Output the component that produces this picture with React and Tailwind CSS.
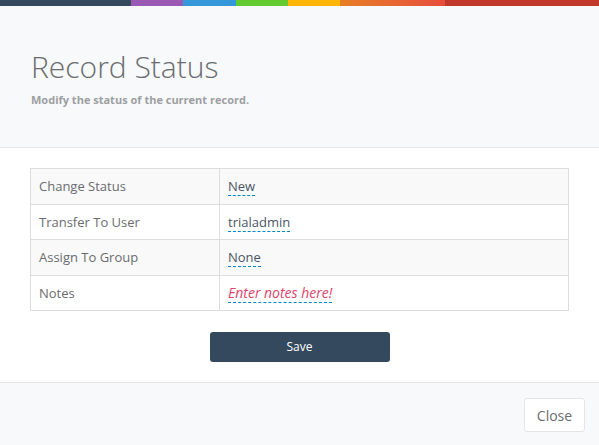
import React from "react";

const rows = [
  { label: "Change Status", value: "New" },
  { label: "Transfer To User", value: "trialadmin" },
  { label: "Assign To Group", value: "None" },
  { label: "Notes", value: "Enter notes here!", empty: true },
];

const ColorBar = () => (
  <div className="flex h-[6px]">
    <div className="w-[131px] bg-[#34495e]" />
    <div className="w-[52px] bg-[#9b59b6]" />
    <div className="w-[53px] bg-[#3498db]" />
    <div className="w-[52px] bg-[#62cb31]" />
    <div className="w-[52px] bg-[#ffb606]" />
    <div className="w-[105px] bg-gradient-to-r from-[#e67e22] to-[#e74c3c]" />
    <div className="flex-1 bg-[#c0392b]" />
  </div>
);

const App = () => {
  return (
    <div className="w-[599px] h-[445px] overflow-hidden bg-white font-['Open_Sans',sans-serif]">
      <ColorBar />

      <div className="bg-[#f7f9fa] border-b border-[#e4e5e7] px-[31px] pt-[44px] pb-[40px]">
        <h4 className="text-[30px] leading-[33px] font-light text-[#6a6c6f]">Record Status</h4>
        <small className="block mt-[9px] text-[11px] leading-[15px] font-bold text-[#9d9fa2]">
          Modify the status of the current record.
        </small>
      </div>

      <div className="px-[30px] pt-[20px] pb-[20px]">
        <table className="w-full border-collapse text-[13px] leading-[18.6px]">
          <tbody>
            {rows.map((row, i) => (
              <tr key={row.label} className={i % 2 === 0 ? "bg-[#f9f9f9]" : "bg-white"}>
                <td className="w-[189px] border border-[#dddddd] px-[8px] py-[8px] text-[#6a6c6f]">
                  {row.label}
                </td>
                <td className="border border-[#dddddd] px-[8px] py-[8px]">
                  <a
                    className={`border-b border-dashed border-[#0088cc] ${
                      row.empty ? "italic text-[14px] text-[#e0446c]" : "text-[#4a5666]"
                    }`}
                  >
                    {row.value}
                  </a>
                </td>
              </tr>
            ))}
          </tbody>
        </table>

        <div className="flex justify-center mt-[21px]">
          <button className="w-[180px] h-[30px] rounded-[3px] bg-[#34495e] text-white text-[12px] leading-[30px]">
            Save
          </button>
        </div>
      </div>

      <div className="bg-[#f7f9fa] border-t border-[#e4e5e7] flex justify-end px-[14px] pt-[15px] pb-[15px]">
        <button className="w-[61px] h-[34px] rounded-[3px] border border-[#e4e5e7] bg-white text-[14px] text-[#6a6c6f]">
          Close
        </button>
      </div>
    </div>
  );
};

export default App;
